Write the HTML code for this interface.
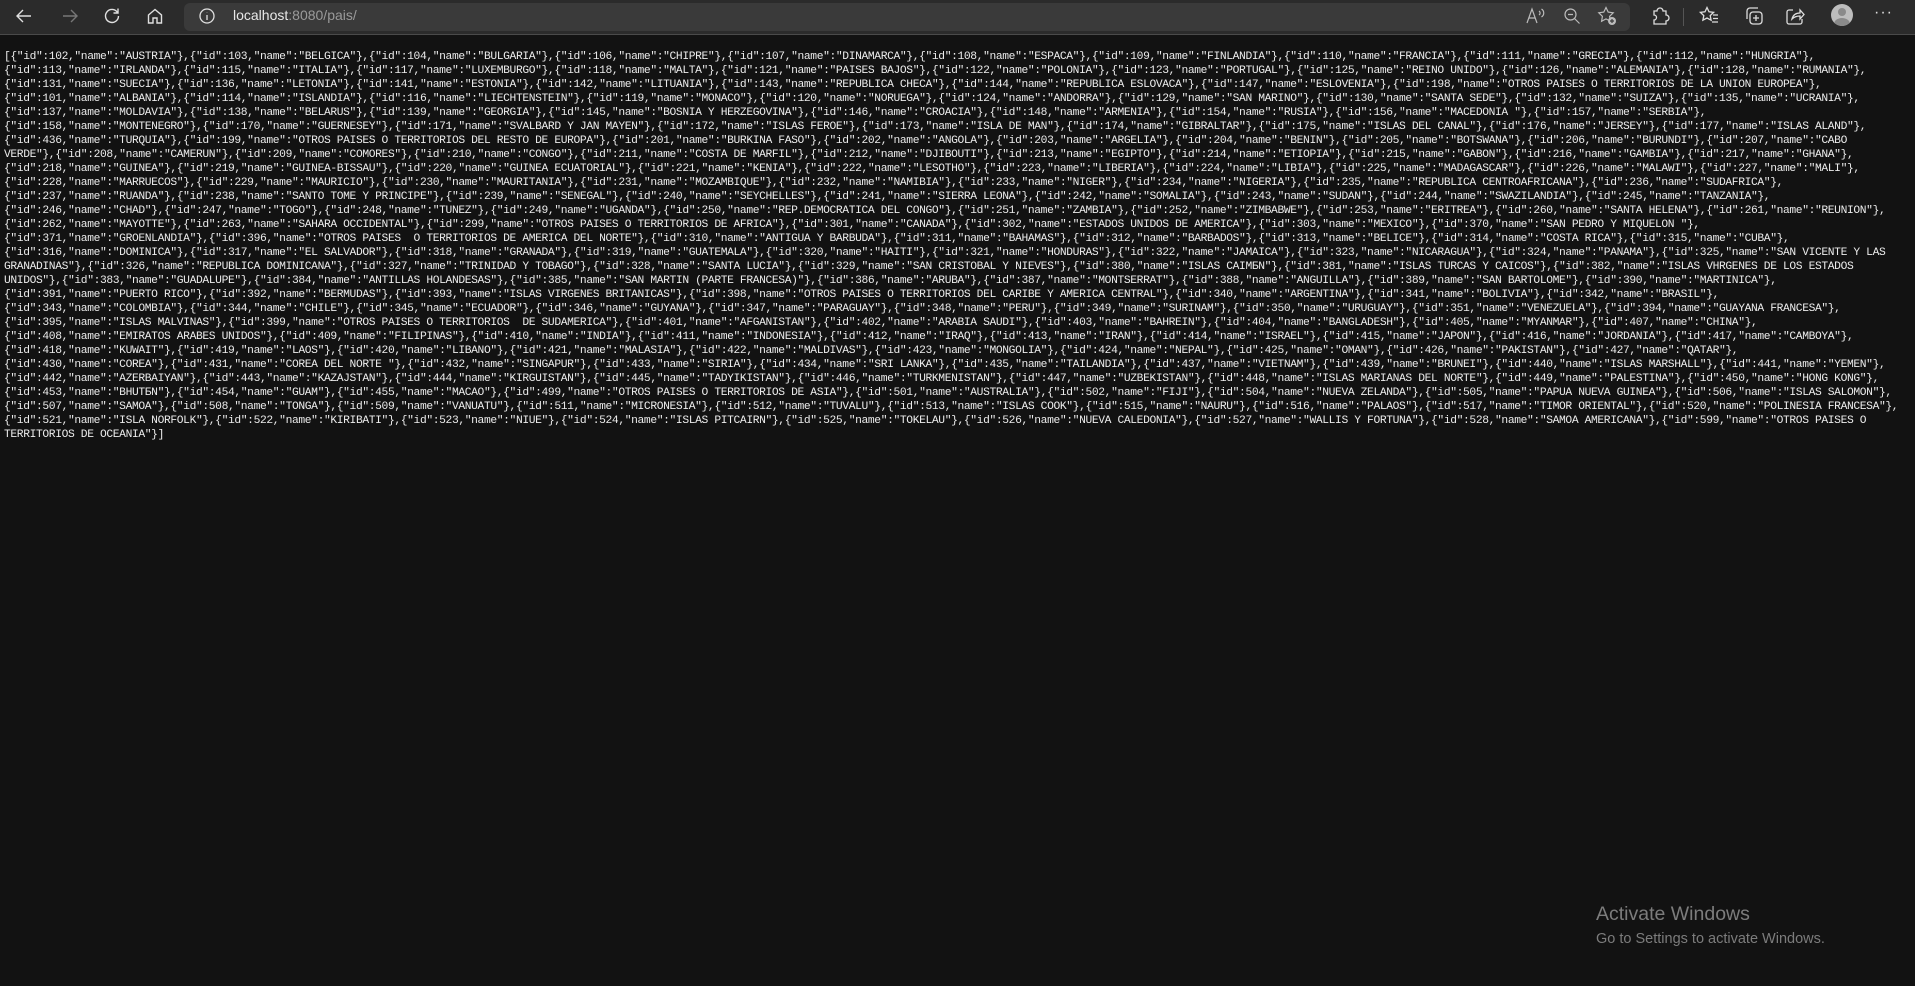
<!DOCTYPE html>
<html><head><meta charset="utf-8"><style>
html,body{margin:0;padding:0;background:#121212;width:1915px;height:986px;overflow:hidden;}
#bar{position:absolute;left:0;top:0;width:1915px;height:34px;background:#2b2b2b;border-bottom:1px solid #4a4a4a;}
#addr{position:absolute;left:184px;top:3px;width:1446px;height:28px;background:#3a3a3a;border-radius:6px;}
#url{position:absolute;left:233px;top:7px;font:14px "Liberation Sans",sans-serif;color:#9a9a9a;}
#url b{font-weight:normal;color:#e8e8e8;}
svg.i{position:absolute;}
pre{position:absolute;left:4px;top:50px;margin:0;font-family:"Liberation Mono",monospace;font-size:11.3px;letter-spacing:-0.38px;line-height:14px;color:#ececec;white-space:pre;}
#aw{position:absolute;left:1596px;top:903px;font:19.5px "Liberation Sans",sans-serif;color:#7c7c7c;}
#aw2{position:absolute;left:1596px;top:931px;font:14.5px "Liberation Sans",sans-serif;color:#7c7c7c;}
</style></head><body>
<div id="bar">
<svg class="i" style="left:14px;top:6px" width="20" height="20" viewBox="0 0 20 20" fill="none" stroke="#e0e0e0" stroke-width="1.4"><path d="M17 10H3M9 4l-6 6 6 6"/></svg>
<svg class="i" style="left:60px;top:6px" width="20" height="20" viewBox="0 0 20 20" fill="none" stroke="#777" stroke-width="1.4"><path d="M3 10h14M11 4l6 6-6 6"/></svg>
<svg class="i" style="left:102px;top:6px" width="20" height="20" viewBox="0 0 20 20" fill="none" stroke="#e0e0e0" stroke-width="1.4"><path d="M15.5 6.5A6.5 6.5 0 1 0 16.5 10M16 2.5v4.5h-4.5"/></svg>
<svg class="i" style="left:145px;top:6px" width="20" height="20" viewBox="0 0 20 20" fill="none" stroke="#e0e0e0" stroke-width="1.4"><path d="M3.5 9L10 3.5 16.5 9V17h-4.5v-5h-4v5H3.5z"/></svg>
<div id="addr"></div>
<svg class="i" style="left:198px;top:7px" width="18" height="18" viewBox="0 0 18 18" fill="none" stroke="#e0e0e0" stroke-width="1.3"><circle cx="9" cy="9" r="7"/><path d="M9 8v5M9 5.2v.3"/></svg>
<div id="url"><b>localhost</b>:8080/pais/</div>
<svg class="i" style="left:1525px;top:6px" width="22" height="20" viewBox="0 0 22 20" fill="none" stroke="#bbb" stroke-width="1.2"><path d="M2 17L7 3l5 14M4 12h6M14 5c1.5 1 1.5 3 0 4M16.5 3c3 2 3 6 0 8"/></svg>
<svg class="i" style="left:1562px;top:6px" width="20" height="20" viewBox="0 0 20 20" fill="none" stroke="#bbb" stroke-width="1.2"><circle cx="8.5" cy="8.5" r="5.5"/><path d="M12.5 12.5l5 5M6 8.5h5"/></svg>
<svg class="i" style="left:1596px;top:5px" width="22" height="22" viewBox="0 0 22 22" fill="none" stroke="#bbb" stroke-width="1.2"><path d="M10 2.5l2.2 4.6 5 .7-3.6 3.5.8 5-4.4-2.4-4.4 2.4.8-5L2.8 7.8l5-.7z"/><circle cx="16" cy="16" r="4" fill="#bbb" stroke="none"/><path d="M16 14v4M14 16h4" stroke="#3a3a3a"/></svg>
<svg class="i" style="left:1649px;top:5px" width="22" height="22" viewBox="0 0 22 22" fill="none" stroke="#ddd" stroke-width="1.3"><path d="M5 6h3a3 3 0 0 1 6 0h3v4a3 3 0 0 1 0 6v3H5v-4a2.5 2.5 0 0 0 0-5z"/></svg>
<div style="position:absolute;left:1683px;top:8px;width:1px;height:18px;background:#555"></div>
<svg class="i" style="left:1698px;top:5px" width="22" height="22" viewBox="0 0 22 22" fill="none" stroke="#ddd" stroke-width="1.3"><path d="M9 2.5l2 4.3 4.6.6-3.4 3.2.9 4.6L9 13l-4.1 2.2.9-4.6L2.4 7.4 7 6.8zM15 10h5M15 13.5h5M14 17h6"/></svg>
<svg class="i" style="left:1743px;top:5px" width="22" height="22" viewBox="0 0 22 22" fill="none" stroke="#ddd" stroke-width="1.3"><path d="M4 14V6a3 3 0 0 1 3-3h8"/><rect x="7" y="7" width="12" height="12" rx="3"/><path d="M13 10v6M10 13h6"/></svg>
<svg class="i" style="left:1784px;top:5px" width="22" height="22" viewBox="0 0 22 22" fill="none" stroke="#ddd" stroke-width="1.3"><path d="M9 5H5a2 2 0 0 0-2 2v10a2 2 0 0 0 2 2h11a2 2 0 0 0 2-2v-3M8 14c1-4 4-6 8-6V5l4 4.5-4 4.5v-3c-3 0-6 1-8 3z"/></svg>
<div style="position:absolute;left:1831px;top:4px;width:22px;height:22px;border-radius:50%;background:#bdbdbd;overflow:hidden"><div style="position:absolute;left:7px;top:4px;width:8px;height:8px;border-radius:50%;background:#8a8a8a"></div><div style="position:absolute;left:3px;top:14px;width:16px;height:12px;border-radius:50%;background:#8a8a8a"></div></div>
<div style="position:absolute;left:1874px;top:4px;font:16px 'Liberation Sans',sans-serif;color:#ddd;letter-spacing:1px">···</div>
</div>
<pre>[{"id":102,"name":"AUSTRIA"},{"id":103,"name":"BELGICA"},{"id":104,"name":"BULGARIA"},{"id":106,"name":"CHIPRE"},{"id":107,"name":"DINAMARCA"},{"id":108,"name":"ESPACA"},{"id":109,"name":"FINLANDIA"},{"id":110,"name":"FRANCIA"},{"id":111,"name":"GRECIA"},{"id":112,"name":"HUNGRIA"},
{"id":113,"name":"IRLANDA"},{"id":115,"name":"ITALIA"},{"id":117,"name":"LUXEMBURGO"},{"id":118,"name":"MALTA"},{"id":121,"name":"PAISES BAJOS"},{"id":122,"name":"POLONIA"},{"id":123,"name":"PORTUGAL"},{"id":125,"name":"REINO UNIDO"},{"id":126,"name":"ALEMANIA"},{"id":128,"name":"RUMANIA"},
{"id":131,"name":"SUECIA"},{"id":136,"name":"LETONIA"},{"id":141,"name":"ESTONIA"},{"id":142,"name":"LITUANIA"},{"id":143,"name":"REPUBLICA CHECA"},{"id":144,"name":"REPUBLICA ESLOVACA"},{"id":147,"name":"ESLOVENIA"},{"id":198,"name":"OTROS PAISES O TERRITORIOS DE LA UNION EUROPEA"},
{"id":101,"name":"ALBANIA"},{"id":114,"name":"ISLANDIA"},{"id":116,"name":"LIECHTENSTEIN"},{"id":119,"name":"MONACO"},{"id":120,"name":"NORUEGA"},{"id":124,"name":"ANDORRA"},{"id":129,"name":"SAN MARINO"},{"id":130,"name":"SANTA SEDE"},{"id":132,"name":"SUIZA"},{"id":135,"name":"UCRANIA"},
{"id":137,"name":"MOLDAVIA"},{"id":138,"name":"BELARUS"},{"id":139,"name":"GEORGIA"},{"id":145,"name":"BOSNIA Y HERZEGOVINA"},{"id":146,"name":"CROACIA"},{"id":148,"name":"ARMENIA"},{"id":154,"name":"RUSIA"},{"id":156,"name":"MACEDONIA "},{"id":157,"name":"SERBIA"},
{"id":158,"name":"MONTENEGRO"},{"id":170,"name":"GUERNESEY"},{"id":171,"name":"SVALBARD Y JAN MAYEN"},{"id":172,"name":"ISLAS FEROE"},{"id":173,"name":"ISLA DE MAN"},{"id":174,"name":"GIBRALTAR"},{"id":175,"name":"ISLAS DEL CANAL"},{"id":176,"name":"JERSEY"},{"id":177,"name":"ISLAS ALAND"},
{"id":436,"name":"TURQUIA"},{"id":199,"name":"OTROS PAISES O TERRITORIOS DEL RESTO DE EUROPA"},{"id":201,"name":"BURKINA FASO"},{"id":202,"name":"ANGOLA"},{"id":203,"name":"ARGELIA"},{"id":204,"name":"BENIN"},{"id":205,"name":"BOTSWANA"},{"id":206,"name":"BURUNDI"},{"id":207,"name":"CABO
VERDE"},{"id":208,"name":"CAMERUN"},{"id":209,"name":"COMORES"},{"id":210,"name":"CONGO"},{"id":211,"name":"COSTA DE MARFIL"},{"id":212,"name":"DJIBOUTI"},{"id":213,"name":"EGIPTO"},{"id":214,"name":"ETIOPIA"},{"id":215,"name":"GABON"},{"id":216,"name":"GAMBIA"},{"id":217,"name":"GHANA"},
{"id":218,"name":"GUINEA"},{"id":219,"name":"GUINEA-BISSAU"},{"id":220,"name":"GUINEA ECUATORIAL"},{"id":221,"name":"KENIA"},{"id":222,"name":"LESOTHO"},{"id":223,"name":"LIBERIA"},{"id":224,"name":"LIBIA"},{"id":225,"name":"MADAGASCAR"},{"id":226,"name":"MALAWI"},{"id":227,"name":"MALI"},
{"id":228,"name":"MARRUECOS"},{"id":229,"name":"MAURICIO"},{"id":230,"name":"MAURITANIA"},{"id":231,"name":"MOZAMBIQUE"},{"id":232,"name":"NAMIBIA"},{"id":233,"name":"NIGER"},{"id":234,"name":"NIGERIA"},{"id":235,"name":"REPUBLICA CENTROAFRICANA"},{"id":236,"name":"SUDAFRICA"},
{"id":237,"name":"RUANDA"},{"id":238,"name":"SANTO TOME Y PRINCIPE"},{"id":239,"name":"SENEGAL"},{"id":240,"name":"SEYCHELLES"},{"id":241,"name":"SIERRA LEONA"},{"id":242,"name":"SOMALIA"},{"id":243,"name":"SUDAN"},{"id":244,"name":"SWAZILANDIA"},{"id":245,"name":"TANZANIA"},
{"id":246,"name":"CHAD"},{"id":247,"name":"TOGO"},{"id":248,"name":"TUNEZ"},{"id":249,"name":"UGANDA"},{"id":250,"name":"REP.DEMOCRATICA DEL CONGO"},{"id":251,"name":"ZAMBIA"},{"id":252,"name":"ZIMBABWE"},{"id":253,"name":"ERITREA"},{"id":260,"name":"SANTA HELENA"},{"id":261,"name":"REUNION"},
{"id":262,"name":"MAYOTTE"},{"id":263,"name":"SAHARA OCCIDENTAL"},{"id":299,"name":"OTROS PAISES O TERRITORIOS DE AFRICA"},{"id":301,"name":"CANADA"},{"id":302,"name":"ESTADOS UNIDOS DE AMERICA"},{"id":303,"name":"MEXICO"},{"id":370,"name":"SAN PEDRO Y MIQUELON "},
{"id":371,"name":"GROENLANDIA"},{"id":396,"name":"OTROS PAISES  O TERRITORIOS DE AMERICA DEL NORTE"},{"id":310,"name":"ANTIGUA Y BARBUDA"},{"id":311,"name":"BAHAMAS"},{"id":312,"name":"BARBADOS"},{"id":313,"name":"BELICE"},{"id":314,"name":"COSTA RICA"},{"id":315,"name":"CUBA"},
{"id":316,"name":"DOMINICA"},{"id":317,"name":"EL SALVADOR"},{"id":318,"name":"GRANADA"},{"id":319,"name":"GUATEMALA"},{"id":320,"name":"HAITI"},{"id":321,"name":"HONDURAS"},{"id":322,"name":"JAMAICA"},{"id":323,"name":"NICARAGUA"},{"id":324,"name":"PANAMA"},{"id":325,"name":"SAN VICENTE Y LAS
GRANADINAS"},{"id":326,"name":"REPUBLICA DOMINICANA"},{"id":327,"name":"TRINIDAD Y TOBAGO"},{"id":328,"name":"SANTA LUCIA"},{"id":329,"name":"SAN CRISTOBAL Y NIEVES"},{"id":380,"name":"ISLAS CAIMБN"},{"id":381,"name":"ISLAS TURCAS Y CAICOS"},{"id":382,"name":"ISLAS VHRGENES DE LOS ESTADOS
UNIDOS"},{"id":383,"name":"GUADALUPE"},{"id":384,"name":"ANTILLAS HOLANDESAS"},{"id":385,"name":"SAN MARTIN (PARTE FRANCESA)"},{"id":386,"name":"ARUBA"},{"id":387,"name":"MONTSERRAT"},{"id":388,"name":"ANGUILLA"},{"id":389,"name":"SAN BARTOLOME"},{"id":390,"name":"MARTINICA"},
{"id":391,"name":"PUERTO RICO"},{"id":392,"name":"BERMUDAS"},{"id":393,"name":"ISLAS VIRGENES BRITANICAS"},{"id":398,"name":"OTROS PAISES O TERRITORIOS DEL CARIBE Y AMERICA CENTRAL"},{"id":340,"name":"ARGENTINA"},{"id":341,"name":"BOLIVIA"},{"id":342,"name":"BRASIL"},
{"id":343,"name":"COLOMBIA"},{"id":344,"name":"CHILE"},{"id":345,"name":"ECUADOR"},{"id":346,"name":"GUYANA"},{"id":347,"name":"PARAGUAY"},{"id":348,"name":"PERU"},{"id":349,"name":"SURINAM"},{"id":350,"name":"URUGUAY"},{"id":351,"name":"VENEZUELA"},{"id":394,"name":"GUAYANA FRANCESA"},
{"id":395,"name":"ISLAS MALVINAS"},{"id":399,"name":"OTROS PAISES O TERRITORIOS  DE SUDAMERICA"},{"id":401,"name":"AFGANISTAN"},{"id":402,"name":"ARABIA SAUDI"},{"id":403,"name":"BAHREIN"},{"id":404,"name":"BANGLADESH"},{"id":405,"name":"MYANMAR"},{"id":407,"name":"CHINA"},
{"id":408,"name":"EMIRATOS ARABES UNIDOS"},{"id":409,"name":"FILIPINAS"},{"id":410,"name":"INDIA"},{"id":411,"name":"INDONESIA"},{"id":412,"name":"IRAQ"},{"id":413,"name":"IRAN"},{"id":414,"name":"ISRAEL"},{"id":415,"name":"JAPON"},{"id":416,"name":"JORDANIA"},{"id":417,"name":"CAMBOYA"},
{"id":418,"name":"KUWAIT"},{"id":419,"name":"LAOS"},{"id":420,"name":"LIBANO"},{"id":421,"name":"MALASIA"},{"id":422,"name":"MALDIVAS"},{"id":423,"name":"MONGOLIA"},{"id":424,"name":"NEPAL"},{"id":425,"name":"OMAN"},{"id":426,"name":"PAKISTAN"},{"id":427,"name":"QATAR"},
{"id":430,"name":"COREA"},{"id":431,"name":"COREA DEL NORTE "},{"id":432,"name":"SINGAPUR"},{"id":433,"name":"SIRIA"},{"id":434,"name":"SRI LANKA"},{"id":435,"name":"TAILANDIA"},{"id":437,"name":"VIETNAM"},{"id":439,"name":"BRUNEI"},{"id":440,"name":"ISLAS MARSHALL"},{"id":441,"name":"YEMEN"},
{"id":442,"name":"AZERBAIYAN"},{"id":443,"name":"KAZAJSTAN"},{"id":444,"name":"KIRGUISTAN"},{"id":445,"name":"TADYIKISTAN"},{"id":446,"name":"TURKMENISTAN"},{"id":447,"name":"UZBEKISTAN"},{"id":448,"name":"ISLAS MARIANAS DEL NORTE"},{"id":449,"name":"PALESTINA"},{"id":450,"name":"HONG KONG"},
{"id":453,"name":"BHUTБN"},{"id":454,"name":"GUAM"},{"id":455,"name":"MACAO"},{"id":499,"name":"OTROS PAISES O TERRITORIOS DE ASIA"},{"id":501,"name":"AUSTRALIA"},{"id":502,"name":"FIJI"},{"id":504,"name":"NUEVA ZELANDA"},{"id":505,"name":"PAPUA NUEVA GUINEA"},{"id":506,"name":"ISLAS SALOMON"},
{"id":507,"name":"SAMOA"},{"id":508,"name":"TONGA"},{"id":509,"name":"VANUATU"},{"id":511,"name":"MICRONESIA"},{"id":512,"name":"TUVALU"},{"id":513,"name":"ISLAS COOK"},{"id":515,"name":"NAURU"},{"id":516,"name":"PALAOS"},{"id":517,"name":"TIMOR ORIENTAL"},{"id":520,"name":"POLINESIA FRANCESA"},
{"id":521,"name":"ISLA NORFOLK"},{"id":522,"name":"KIRIBATI"},{"id":523,"name":"NIUE"},{"id":524,"name":"ISLAS PITCAIRN"},{"id":525,"name":"TOKELAU"},{"id":526,"name":"NUEVA CALEDONIA"},{"id":527,"name":"WALLIS Y FORTUNA"},{"id":528,"name":"SAMOA AMERICANA"},{"id":599,"name":"OTROS PAISES O
TERRITORIOS DE OCEANIA"}]</pre>
<div id="aw">Activate Windows</div>
<div id="aw2">Go to Settings to activate Windows.</div>
</body></html>
